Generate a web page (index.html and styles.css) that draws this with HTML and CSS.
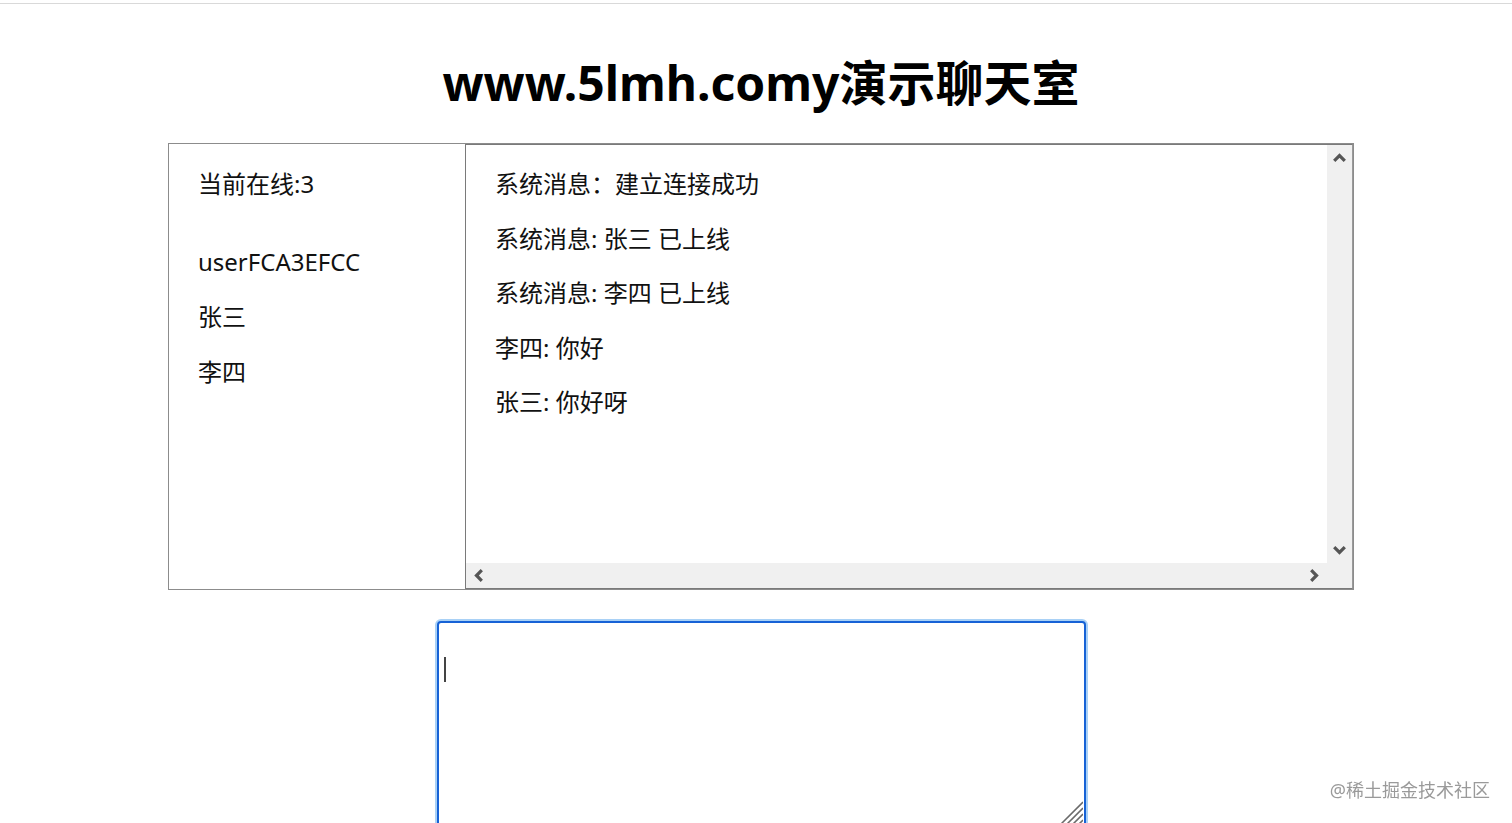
FILE: index.html
```html
<!DOCTYPE html>
<html lang="zh-CN">
<head>
  <meta charset="UTF-8" />
  <meta name="viewport" content="width=device-width, initial-scale=1.0" />
  <title>演示聊天室</title>
  <link rel="stylesheet" href="styles.css">
</head>
<body>
  <div class="page">
    <h1>www.5lmh.comy演示聊天室</h1>

    <div class="chat">
      <div class="users">
        <p class="online">当前在线:3</p>
        <p>userFCA3EFCC</p>
        <p>张三</p>
        <p>李四</p>
      </div>

      <div class="messages">
        <div class="msg-list">
          <p>系统消息：建立连接成功</p>
          <p>系统消息: 张三 已上线</p>
          <p>系统消息: 李四 已上线</p>
          <p>李四: 你好</p>
          <p>张三: 你好呀</p>
        </div>
        <div class="vbar">
          <span class="arrow">
            <svg width="13" height="9" viewBox="0 0 13 9"><polyline points="1.2,7.8 6.5,2.5 11.8,7.8" /></svg>
          </span>
          <span class="arrow">
            <svg width="13" height="9" viewBox="0 0 13 9"><polyline points="1.2,1.2 6.5,6.5 11.8,1.2" /></svg>
          </span>
        </div>
        <div class="hbar">
          <span class="arrow">
            <svg width="9" height="13" viewBox="0 0 9 13"><polyline points="7.8,1.2 2.5,6.5 7.8,11.8" /></svg>
          </span>
          <span class="arrow">
            <svg width="9" height="13" viewBox="0 0 9 13"><polyline points="1.2,1.2 6.5,6.5 1.2,11.8" /></svg>
          </span>
        </div>
        <div class="corner"></div>
      </div>
    </div>

    <div class="input-wrap">
      <textarea class="input"></textarea>
      <span class="caret"></span>
      <svg class="grip" width="24" height="24" viewBox="0 0 24 24">
        <line x1="2" y1="24" x2="24" y2="2" />
        <line x1="8" y1="24" x2="24" y2="8" />
        <line x1="14" y1="24" x2="24" y2="14" />
        <line x1="20" y1="24" x2="24" y2="20" />
      </svg>
    </div>
  </div>

  <div class="watermark">@稀土掘金技术社区</div>
</body>
</html>
```

FILE: styles.css
```css
body {
  margin: 0;
  font-family: "Noto Sans", "Noto Sans CJK SC", sans-serif;
  color: #111;
  background: #fff;
  overflow: hidden;
}
.page {
  margin-top: 3px;
  border-top: 1px solid #d9d9d9;
  padding-left: 10px;
}
h1 {
  margin: 47px 0 28px;
  font-size: 48px;
  line-height: 64px;
  font-weight: 700;
  text-align: center;
  color: #000;
}
.chat {
  display: flex;
  width: 1186px;
  height: 447px;
  margin: 0 auto;
  border: 1px solid #8c8c8c;
  box-sizing: border-box;
}
.users {
  width: 296px;
  padding-left: 29px;
  box-sizing: border-box;
}
p {
  margin: 24px 0;
  font-size: 24px;
  line-height: 30.5px;
}
.users p {
  line-height: 31px;
}
.users .online {
  margin-bottom: 47px;
}
.messages {
  flex: 1;
  display: grid;
  grid-template-columns: 1fr 25px;
  grid-template-rows: 1fr 25px;
  border: 1px solid #7a7a7a;
  border-right-color: #9a9a9a;
}
.msg-list {
  padding-left: 29px;
  overflow: hidden;
}
.vbar, .hbar, .corner {
  background: #f0f0f0;
  display: flex;
  justify-content: space-between;
}
.vbar {
  flex-direction: column;
}
.arrow {
  width: 25px;
  height: 25px;
  display: flex;
  align-items: center;
  justify-content: center;
}
.arrow polyline {
  fill: none;
  stroke: #555;
  stroke-width: 3.2;
}
.input-wrap {
  position: relative;
  width: 649px;
  margin: 31px auto 0;
}
.input {
  display: block;
  width: 649px;
  height: 206px;
  box-sizing: border-box;
  border: 2px solid #1662d6;
  border-radius: 4px;
  box-shadow: 0 0 0 2px #a9d1f6;
  outline: none;
  resize: none;
  font: 24px "Noto Sans", "Noto Sans CJK SC", sans-serif;
}
.caret {
  position: absolute;
  left: 7px;
  top: 36px;
  width: 2px;
  height: 25px;
  background: #444;
}
.grip {
  position: absolute;
  right: 3px;
  bottom: 3px;
}
.grip line {
  stroke: #6a6a6a;
  stroke-width: 1.6;
}
.watermark {
  position: fixed;
  right: 22px;
  bottom: 21px;
  font-size: 18px;
  line-height: 24px;
  color: #9a9a9a;
}
```
